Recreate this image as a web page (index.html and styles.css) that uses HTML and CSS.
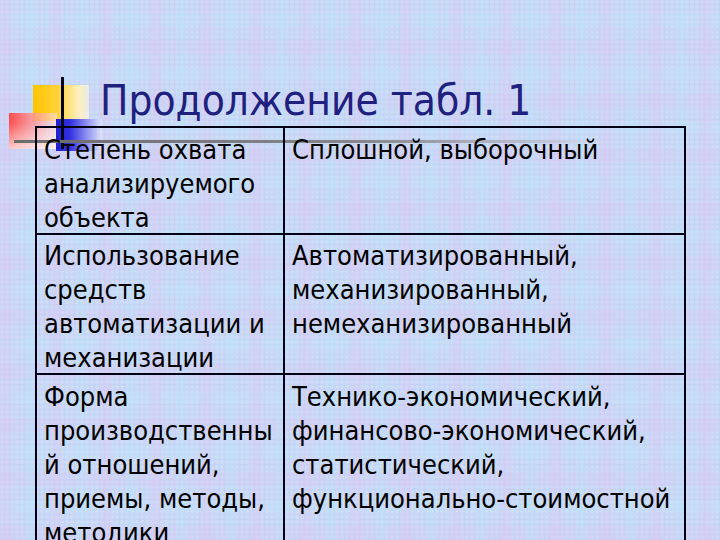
FILE: index.html
```html
<!DOCTYPE html>
<html lang="ru">
<head>
<meta charset="utf-8">
<title>Продолжение табл. 1</title>
<link rel="stylesheet" href="styles.css">
</head>
<body>
<div class="slide">
  <div class="logo" aria-hidden="true">
    <div class="sq yellow"></div>
    <div class="sq red"></div>
    <div class="sq blue"></div>
    <div class="vline"></div>
    <div class="hline"></div>
  </div>
  <h1 class="title">Продолжение табл. 1</h1>
  <table class="grid">
    <tr class="r1">
      <td class="c1"><div class="cell">Степень охвата<br>анализируемого<br>объекта</div></td>
      <td class="c2"><div class="cell">Сплошной, выборочный</div></td>
    </tr>
    <tr class="r2">
      <td class="c1"><div class="cell">Использование<br>средств<br>автоматизации и<br>механизации</div></td>
      <td class="c2"><div class="cell">Автоматизированный,<br>механизированный,<br>немеханизированный</div></td>
    </tr>
    <tr class="r3">
      <td class="c1"><div class="cell">Форма<br>производственны<br>й отношений,<br>приемы, методы,<br>методики</div></td>
      <td class="c2"><div class="cell">Технико-экономический,<br>финансово-экономический,<br>статистический,<br>функционально-стоимостной</div></td>
    </tr>
  </table>
</div>
</body>
</html>
```

FILE: styles.css
```css
html, body {
  margin: 0;
  padding: 0;
  width: 720px;
  height: 540px;
  overflow: hidden;
}
body {
  background-color: #c4d4f4;
  background-image:
    repeating-linear-gradient(90deg, rgba(218,200,244,0.35) 0 12px, rgba(0,0,0,0) 12px 26px, rgba(188,226,250,0.35) 26px 36px, rgba(0,0,0,0) 36px 50px),
    repeating-linear-gradient(0deg, rgba(214,200,244,0.3) 0 14px, rgba(0,0,0,0) 14px 28px, rgba(192,228,250,0.3) 28px 40px, rgba(0,0,0,0) 40px 54px),
    radial-gradient(circle at 40% 40%, rgba(255,255,255,0.18) 0 1.5px, rgba(0,0,0,0) 2.5px);
  background-size: auto, auto, 5px 5px;
}
.slide {
  position: relative;
  width: 720px;
  height: 540px;
  font-family: "DejaVu Sans Condensed", "DejaVu Sans", sans-serif;
  font-stretch: condensed;
}
.logo {
  position: absolute;
  left: 0;
  top: 0;
  width: 720px;
  height: 170px;
  pointer-events: none;
}
.sq { position: absolute; }
.yellow {
  left: 33px; top: 85px; width: 56px; height: 36px;
  background: linear-gradient(90deg, #ffc400 0%, #ffd23a 45%, #ffeeb8 80%, rgba(255,250,230,0.6) 100%);
}
.red {
  left: 9px; top: 113px; width: 48px; height: 36px;
  background: linear-gradient(90deg, rgba(255,70,70,0.95) 0%, rgba(255,140,140,0.85) 45%, rgba(255,230,230,0.6) 100%);
}
.red::after {
  content: "";
  position: absolute; left: 0; right: 0; top: 10px; bottom: 0;
  background: linear-gradient(180deg, rgba(255,255,255,0) 0%, rgba(255,245,245,0.75) 100%);
}
.blue {
  left: 56px; top: 119px; width: 46px; height: 32px;
  background: linear-gradient(90deg, #2020d0 0%, #3030e0 30%, #8a8af0 65%, rgba(240,240,255,0.5) 100%);
}
.vline {
  position: absolute;
  left: 61px; top: 77px; width: 3px; height: 72px;
  background: #000018;
}
.hline {
  position: absolute;
  left: 14px; top: 140px; width: 590px; height: 3px;
  background: linear-gradient(90deg, #6c6c6c 0%, #888 60%, rgba(220,220,235,0.3) 100%);
}
.title {
  position: relative;
  margin: 0;
  padding: 76px 0 0 100px;
  height: 50px;
  font-weight: normal;
  font-size: 42px;
  line-height: 50px;
  color: #20207e;
  white-space: nowrap;
}
.grid {
  position: relative;
  margin: 0 0 0 35px;
  border-collapse: collapse;
  width: 649px;
  table-layout: fixed;
  font-size: 27px;
  line-height: 34px;
  color: #000;
}
.grid td {
  vertical-align: top;
  padding: 0 0 0 7px;
  white-space: nowrap;
  border: 2px solid #000014;
}
.grid .c1 { width: 239px; }
.grid .c2 { width: 392px; }
.r1 td { padding-top: 5px; }
.r2 td { padding-top: 4px; }
.r3 td { padding-top: 5px; }
.r1 .cell, .r2 .cell { margin-bottom: -2px; }
```
